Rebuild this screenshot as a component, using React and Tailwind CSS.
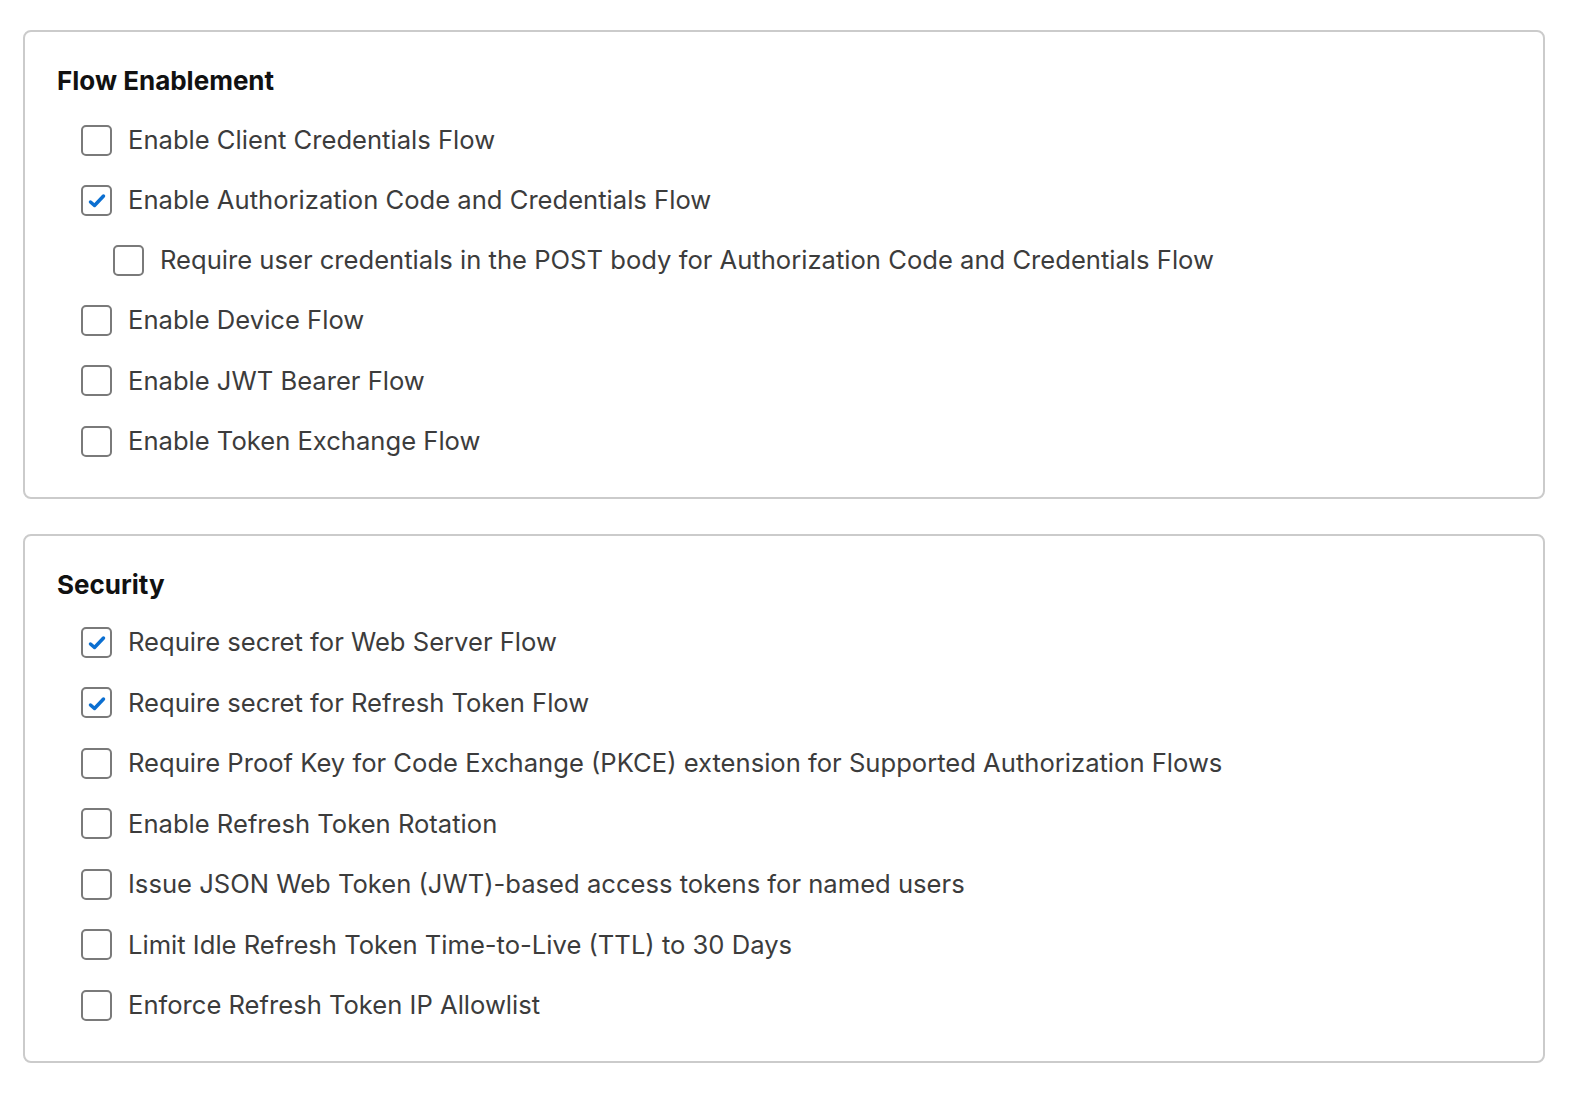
import React from 'react';

const flows = [
  { label: 'Enable Client Credentials Flow', checked: false },
  { label: 'Enable Authorization Code and Credentials Flow', checked: true },
  {
    label:
      'Require user credentials in the POST body for Authorization Code and Credentials Flow',
    checked: false,
    nested: true,
  },
  { label: 'Enable Device Flow', checked: false },
  { label: 'Enable JWT Bearer Flow', checked: false },
  { label: 'Enable Token Exchange Flow', checked: false },
];

const security = [
  { label: 'Require secret for Web Server Flow', checked: true },
  { label: 'Require secret for Refresh Token Flow', checked: true },
  {
    label:
      'Require Proof Key for Code Exchange (PKCE) extension for Supported Authorization Flows',
    checked: false,
  },
  { label: 'Enable Refresh Token Rotation', checked: false },
  {
    label: 'Issue JSON Web Token (JWT)-based access tokens for named users',
    checked: false,
  },
  {
    label: 'Limit Idle Refresh Token Time-to-Live (TTL) to 30 Days',
    checked: false,
  },
  { label: 'Enforce Refresh Token IP Allowlist', checked: false },
];

const Box = ({ checked }) => (
  <span className="flex items-center justify-center w-[31px] h-[31px] rounded-[5px] border-2 border-[#7a7a7a] bg-white shrink-0">
    {checked && (
      <svg width="18" height="16" viewBox="0 0 18 16" className="mt-[2px]">
        <path
          d="M2.5 9 L6.5 12.5 L15.5 3"
          fill="none"
          stroke="#0b6fd1"
          strokeWidth="3.5"
          strokeLinecap="round"
          strokeLinejoin="round"
        />
      </svg>
    )}
  </span>
);

const Section = ({ title, items, rowClass, listClass, bottomClass }) => (
  <section
    className={
      'border-2 border-[#cbcbcb] rounded-[8px] bg-white pl-[32px] pr-8 pt-[33px] ' +
      bottomClass
    }
  >
    <h2 className="text-[26px] leading-[32px] font-bold text-[#111]">{title}</h2>
    <ul className={listClass}>
      {items.map(item => (
        <li
          key={item.label}
          className={
            'flex items-center gap-[16px] ' +
            rowClass +
            (item.nested ? ' pl-[56px]' : ' pl-[24px]')
          }
        >
          <Box checked={item.checked} />
          <span className="text-[25.6px] text-[#3c3c3c]">{item.label}</span>
        </li>
      ))}
    </ul>
  </section>
);

export default function App() {
  return (
    <div
      className="bg-white min-h-screen pl-[23px] pr-[24px] pt-[30px] pb-10 flex flex-col gap-[35px]"
      style={{ fontFamily: 'Inter, "Liberation Sans", sans-serif' }}
    >
      <Section
        title="Flow Enablement"
        items={flows}
        rowClass="h-[60.2px]"
        listClass="mt-[13px]"
        bottomClass="pb-[26px]"
      />
      <Section
        title="Security"
        items={security}
        rowClass="h-[60.5px]"
        listClass="mt-[11px]"
        bottomClass="pb-[25px]"
      />
    </div>
  );
}
